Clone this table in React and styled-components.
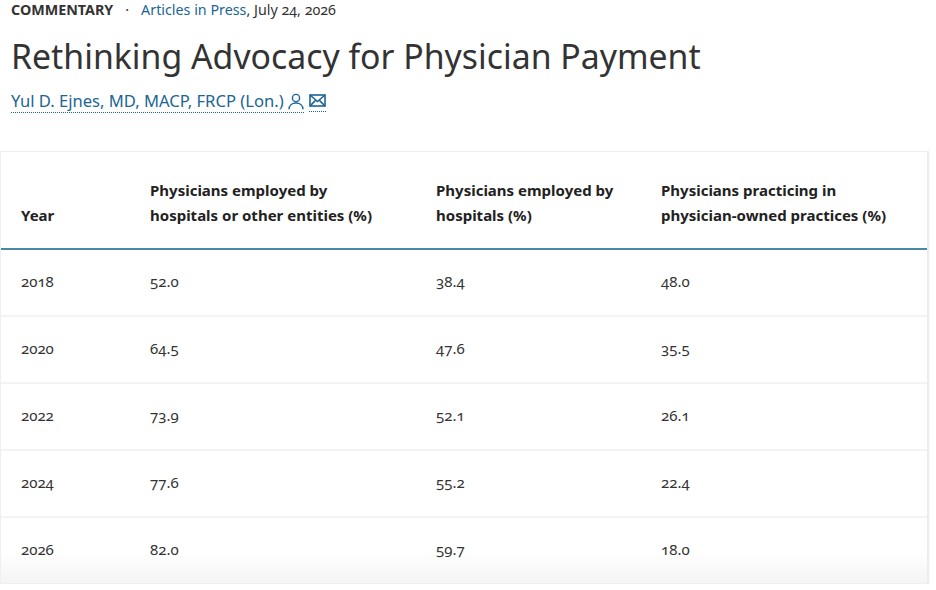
import React from 'react'
import styled, { createGlobalStyle } from 'styled-components'

const GlobalStyle = createGlobalStyle`
  html, body {
    margin: 0;
    padding: 0;
    background: #ffffff;
  }
  body {
    font-family: 'Noto Sans', 'Open Sans', sans-serif;
    color: #333333;
  }
`

const Page = styled.div`
  width: 936px;
`

const Header = styled.header`
  padding: 0 11px;
`

const Kicker = styled.div`
  display: flex;
  align-items: baseline;
  gap: 6px;
  font-size: 14.3px;
  line-height: 20px;
  color: #333333;
  font-variant-numeric: oldstyle-nums;
`

const Section = styled.span`
  font-weight: 700;
`

const Dot = styled.span`
  padding: 0 6px;
`

const Link = styled.a`
  color: #1c6595;
  text-decoration: none;
`

const Title = styled.h1`
  margin: 12px 0 0;
  font-size: 33.8px;
  line-height: 48px;
  font-weight: 400;
  color: #333333;
`

const Byline = styled.div`
  display: flex;
  align-items: center;
  gap: 5px;
  margin-top: 10px;
  font-size: 16.6px;
  line-height: 22px;
`

const Author = styled.a`
  display: inline-flex;
  align-items: center;
  gap: 4px;
  color: #1c6595;
  text-decoration: none;
  border-bottom: 1.5px dotted #1c6595;
`

const IconLink = styled.a`
  display: inline-flex;
  align-items: center;
  color: #1c6595;
  padding: 3px 0 4px;
  border-bottom: 1.5px dotted #1c6595;
`

const TableWrap = styled.div`
  margin-top: 38px;
  width: 929px;
  border: 1px solid #efefef;
  border-right: 2px solid #ececec;
  box-sizing: border-box;
  background: linear-gradient(to bottom, #ffffff 0, #ffffff 400px, #f4f4f4 100%);
  box-shadow: 0 2px 3px rgba(0, 0, 0, 0.04);
`

const Table = styled.table`
  width: 100%;
  table-layout: fixed;
  border-collapse: collapse;
  font-variant-numeric: oldstyle-nums;
`

const Th = styled.th`
  box-sizing: border-box;
  text-align: left;
  vertical-align: bottom;
  font-size: 15px;
  font-weight: 700;
  line-height: 25px;
  color: #222222;
  padding: 26px 34px 20px 12px;
  width: ${p => p.$w};
  border-bottom: 2px solid #4a86a6;
  &:first-child {
    padding-left: 20px;
  }
`

const Td = styled.td`
  font-size: 15px;
  line-height: 22px;
  color: #333333;
  padding: 20px 12px 23px;
  &:first-child {
    padding-left: 20px;
  }
`

const Tr = styled.tr`
  border-bottom: 2px solid #f3f3f3;
  &:last-child {
    border-bottom: none;
  }
`

const PersonIcon = () => (
  <svg width="16" height="17" viewBox="0 0 16 17" fill="none" stroke="currentColor" strokeWidth="1.4">
    <circle cx="8" cy="5" r="3.6" />
    <path d="M1 16.3c0-3.9 3.1-6.3 7-6.3s7 2.4 7 6.3" />
  </svg>
)

const MailIcon = () => (
  <svg width="17" height="13" viewBox="0 0 17 13" fill="none" stroke="currentColor" strokeWidth="1.6">
    <rect x="1" y="1" width="15" height="11" />
    <path d="M1 1l7.5 6.5L16 1M1 12l5.3-5.4M16 12l-5.3-5.4" />
  </svg>
)

const columns = [
  { label: 'Year', w: '137px' },
  { label: 'Physicians employed by hospitals or other entities (%)', w: '286px' },
  { label: 'Physicians employed by hospitals (%)', w: '225px' },
  { label: 'Physicians practicing in physician-owned practices (%)', w: 'auto' },
]

const rows = [
  ['2018', '52.0', '38.4', '48.0'],
  ['2020', '64.5', '47.6', '35.5'],
  ['2022', '73.9', '52.1', '26.1'],
  ['2024', '77.6', '55.2', '22.4'],
  ['2026', '82.0', '59.7', '18.0'],
]

const App = () => (
  <Page>
    <GlobalStyle />
    <Header>
      <Kicker>
        <Section>COMMENTARY</Section>
        <Dot>·</Dot>
        <span>
          <Link href="#">Articles in Press</Link>, July 24, 2026
        </span>
      </Kicker>
      <Title>Rethinking Advocacy for Physician Payment</Title>
      <Byline>
        <Author href="#">
          Yul D. Ejnes, MD, MACP, FRCP (Lon.)
          <PersonIcon />
        </Author>
        <IconLink href="#">
          <MailIcon />
        </IconLink>
      </Byline>
    </Header>
    <TableWrap>
      <Table>
        <thead>
          <tr>
            {columns.map(c => (
              <Th key={c.label} $w={c.w}>
                {c.label}
              </Th>
            ))}
          </tr>
        </thead>
        <tbody>
          {rows.map(r => (
            <Tr key={r[0]}>
              {r.map((v, i) => (
                <Td key={i}>{v}</Td>
              ))}
            </Tr>
          ))}
        </tbody>
      </Table>
    </TableWrap>
  </Page>
)

export default App
